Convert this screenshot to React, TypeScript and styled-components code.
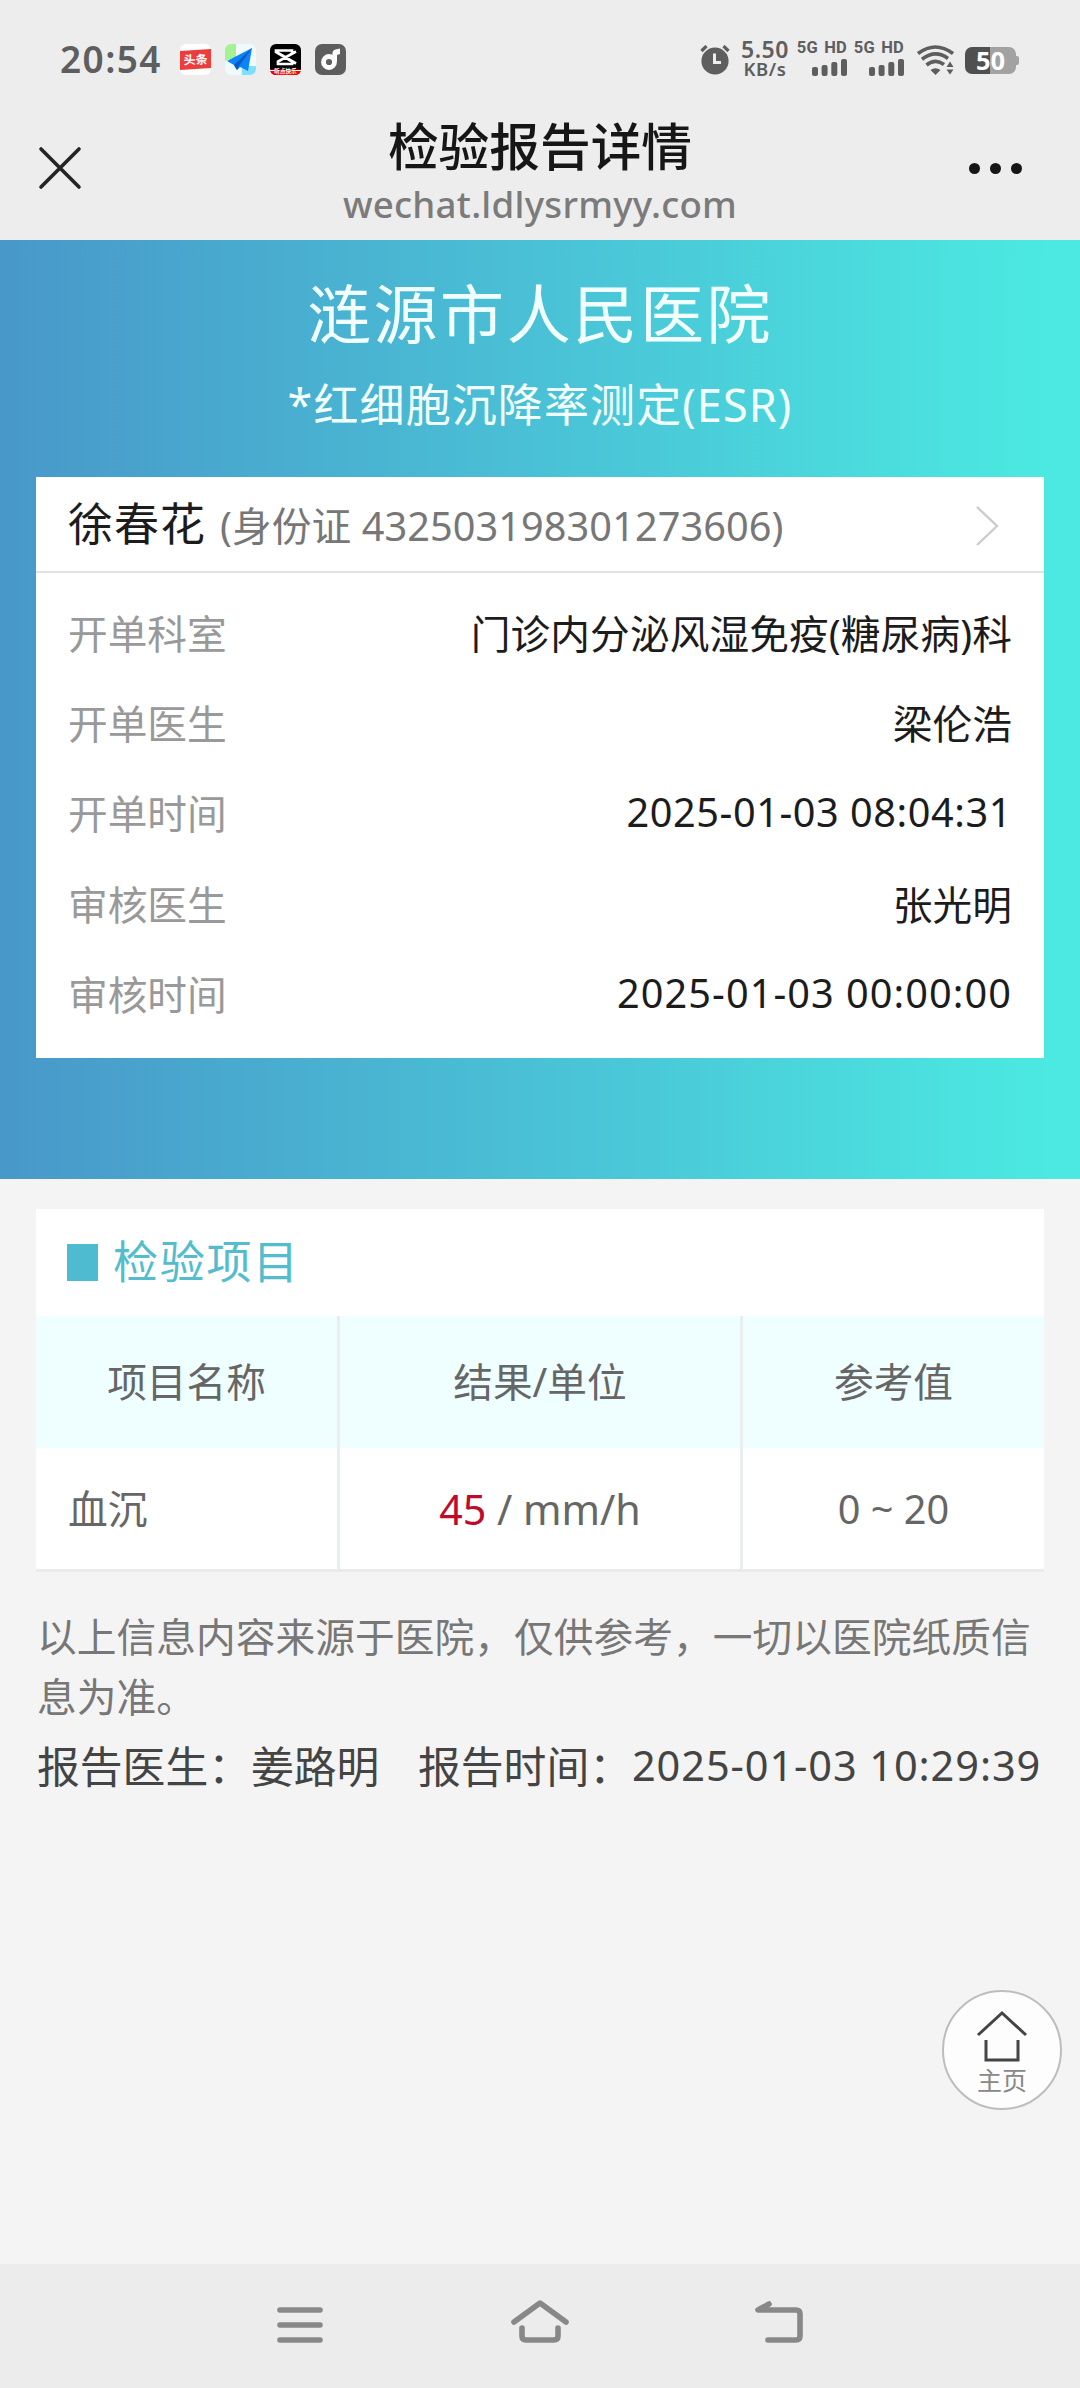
import React from "react";
import styled, { createGlobalStyle } from "styled-components";

const GlobalStyle = createGlobalStyle`
  * { box-sizing: border-box; }
  body { margin: 0; background: #f4f4f4; }
`;

const Screen = styled.div`
  width: 1080px;
  height: 2388px;
  display: flex;
  flex-direction: column;
  background: #f4f4f4;
  color: #1c1c1c;
  font-family: "Noto Sans", "Noto Sans CJK SC", sans-serif;
  font-size: 39.7px;
  white-space: nowrap;
  overflow: hidden;
`;

const TopArea = styled.header`
  height: 240px;
  flex: none;
  background: #ededed;
`;

const StatusBar = styled.div`
  height: 120px;
  padding: 0 61px 0 60px;
  display: flex;
  justify-content: space-between;
  color: #5e5e5e;
`;

const StatusGroup = styled.div`
  display: flex;
  align-items: center;
`;

const Clock = styled.span`
  margin-top: -3px;
  font-size: 37px;
  font-weight: 600;
  line-height: 50px;
  letter-spacing: 1.4px;
  width: 120px;
`;

const AppIcon = styled.svg`
  width: 31px;
  height: 31px;
  margin-right: 14px;
  margin-top: -1px;
  font-family: "Noto Sans CJK SC", sans-serif;
`;

const AlarmSvg = styled.svg`
  width: 30px;
  height: 30px;
  margin-top: -1px;
`;

const Speed = styled.div`
  width: 50px;
  margin: -3px 0 0 10px;
  display: flex;
  flex-direction: column;
  align-items: center;
  font-weight: 600;
`;

const SpeedLine = styled.span<{ $size: number; $spacing: number }>`
  font-size: ${(p) => p.$size}px;
  letter-spacing: ${(p) => p.$spacing}px;
  line-height: 20px;
`;

const Signal = styled.div`
  width: 48px;
  margin: -2px 0 0 9px;
  display: flex;
  flex-direction: column;
  align-items: flex-end;
  gap: 5px;
`;

const SignalLabel = styled.span`
  font-family: Roboto, sans-serif;
  font-size: 16.5px;
  font-weight: 700;
  line-height: 12px;
  word-spacing: 2px;
  letter-spacing: 0.2px;
`;

const BarsSvg = styled.svg`
  width: 35px;
  height: 17px;
`;

const WifiSvg = styled.svg`
  width: 37px;
  height: 30px;
  margin-left: 13px;
`;

const Battery = styled.div`
  width: 51px;
  height: 27px;
  margin: 1px 3px 0 11px;
  border-radius: 7px;
  background: linear-gradient(90deg, #505050 50%, #a2a2a2 50%);
  color: #ffffff;
  font-size: 25.5px;
  font-weight: 700;
  line-height: 27px;
  text-align: center;
  position: relative;

  &::after {
    content: "";
    position: absolute;
    right: -3px;
    top: 9px;
    width: 3px;
    height: 9px;
    border-radius: 0 2px 2px 0;
    background: #a2a2a2;
  }
`;

const TitleBar = styled.div`
  height: 120px;
  display: grid;
  grid-template-columns: 200px 1fr 200px;
`;

const CloseSvg = styled.svg`
  width: 44px;
  height: 44px;
  margin: 26px 0 0 38px;
`;

const TitleText = styled.div`
  display: flex;
  flex-direction: column;
  align-items: center;
`;

const PageTitle = styled.h1`
  margin: 0;
  font-size: 50.7px;
  font-weight: 500;
  line-height: 54px;
  color: #161616;
`;

const PageUrl = styled.span`
  margin-top: 3px;
  font-size: 36.7px;
  font-weight: 500;
  line-height: 54px;
  letter-spacing: 0.25px;
  color: #7b7b7b;
`;

const MoreDots = styled.div`
  display: flex;
  justify-content: flex-end;
  gap: 10px;
  padding: 43px 58px 0 0;
`;

const Dot = styled.i`
  width: 11px;
  height: 11px;
  border-radius: 50%;
  background: #161616;
`;

const Hero = styled.section`
  height: 939px;
  flex: none;
  padding: 36px 36px 0;
  color: #f2ffff;
  text-align: center;
  background: linear-gradient(90deg, #4898c9 0%, #4ac1d6 50%, #4be9e1 97%);
`;

const Hospital = styled.h2`
  margin: 0;
  font-size: 64px;
  font-weight: 400;
  line-height: 76px;
  letter-spacing: 2.6px;
`;

const TestName = styled.div`
  margin-top: 23px;
  height: 60px;
  font-size: 45px;
  line-height: 60px;
  letter-spacing: 1.1px;
`;

const PatientCard = styled.div`
  margin-top: 42px;
  height: 581px;
  background: #ffffff;
  color: #1c1c1c;
`;

const PatientRow = styled.div`
  height: 96px;
  padding: 0 44px 0 32px;
  display: flex;
  align-items: center;
  border-bottom: 2px solid #e2e2e2;
`;

const PatientName = styled.span`
  font-size: 45px;
  line-height: 60px;
  letter-spacing: 1px;
`;

const PatientId = styled.span`
  margin-left: 14px;
  flex: 1;
  text-align: left;
  color: #777777;
  letter-spacing: 0.07px;
`;

const ChevronSvg = styled.svg`
  width: 24px;
  height: 42px;
  margin-top: 3px;
`;

const InfoList = styled.dl`
  margin: 0;
  padding: 14px 32px 0;
`;

const InfoRow = styled.div`
  height: 90.2px;
  display: flex;
  align-items: center;
  justify-content: space-between;
`;

const InfoLabel = styled.dt`
  color: #999999;
`;

const InfoValue = styled.dd<{ $spacing?: number }>`
  margin: 0;
  letter-spacing: ${(p) => p.$spacing ?? 0.1}px;
`;

const Body = styled.main`
  flex: 1;
  padding: 30px 36px 0;
  display: flex;
  flex-direction: column;
`;

const ResultCard = styled.section`
  background: #ffffff;
  border-bottom: 3px solid #eaeaea;
`;

const SectionTitle = styled.h3`
  margin: 0;
  height: 107px;
  padding: 0 31px 6px;
  display: flex;
  align-items: center;
  gap: 15px;
  font-size: 45px;
  font-weight: 400;
  letter-spacing: 1.7px;
  color: #53bccd;
`;

const Marker = styled.i`
  width: 31px;
  height: 37px;
  margin-top: 6px;
  background: #4fbbd0;
`;

const TableRow = styled.div<{ $head?: boolean }>`
  height: ${(p) => (p.$head ? 132 : 121)}px;
  display: grid;
  grid-template-columns: 304px 403px 301px;
  background: ${(p) => (p.$head ? "#efffff" : "#ffffff")};
  color: #666666;
`;

const Cell = styled.div<{ $left?: boolean; $lift?: number; $size?: number }>`
  display: flex;
  align-items: center;
  justify-content: ${(p) => (p.$left ? "flex-start" : "center")};
  padding: 0 ${(p) => (p.$left ? 32 : 0)}px ${(p) => p.$lift ?? 0}px;
  border-right: 3px solid #e9eeee;
  font-size: ${(p) => p.$size ?? 39.7}px;
  white-space: pre;

  &:last-child { border-right: 0; }
`;

const Abnormal = styled.span`
  color: #c00a2c;
`;

const Disclaimer = styled.p`
  margin: 35px 0 0 1px;
  line-height: 60px;
  letter-spacing: 0.06px;
  color: #777777;
  white-space: normal;
`;

const ReportLine = styled.div`
  margin: 5px 0 0 1px;
  height: 64px;
  display: flex;
  align-items: center;
  font-size: 42.8px;
  color: #444444;
`;

const ReportDoctor = styled.span`
  width: 381px;
`;

const ReportDate = styled.span`
  margin-top: 2px;
  font-size: 41.5px;
  letter-spacing: 0.9px;
`;

const HomeButton = styled.button`
  margin: 194px -18px 0 auto;
  width: 120px;
  height: 120px;
  padding: 18px 0 0;
  display: flex;
  flex-direction: column;
  align-items: center;
  border: 2px solid #bdbdbd;
  border-radius: 50%;
  background: #fdfdfd;
  color: #888888;
  font-family: "Noto Sans CJK SC", sans-serif;
  font-size: 25px;
  line-height: 32px;
`;

const HomeSvg = styled.svg`
  width: 52px;
  height: 53px;
`;

const NavBar = styled.nav`
  height: 124px;
  flex: none;
  display: grid;
  grid-template-columns: 240px 240px 240px;
  justify-content: center;
  justify-items: center;
  background: #ececec;
`;

const NavSvg = styled.svg`
  width: 64px;
  height: 64px;
  margin-top: 29px;
  fill: none;
  stroke: #888888;
  stroke-width: 5.6;
  stroke-linecap: round;
  stroke-linejoin: round;
`;

const SignalMeter = () => (
  <Signal>
    <SignalLabel>5G HD</SignalLabel>
    <BarsSvg viewBox="0 0 35 17" fill="#5e5e5e">
      <rect x="0" y="8" width="6" height="9" rx="2" />
      <rect x="9.6" y="6" width="6" height="11" rx="2" />
      <rect x="19.3" y="3" width="6" height="14" rx="2" />
      <rect x="29" y="0" width="6" height="17" rx="2" />
    </BarsSvg>
  </Signal>
);

const info = [
  { label: "开单科室", value: "门诊内分泌风湿免疫(糖尿病)科" },
  { label: "开单医生", value: "梁伦浩" },
  { label: "开单时间", value: "2025-01-03 08:04:31", spacing: 0.55 },
  { label: "审核医生", value: "张光明" },
  { label: "审核时间", value: "2025-01-03 00:00:00", spacing: 1.05 },
];

export default function App() {
  return (
    <Screen>
      <GlobalStyle />
      <TopArea>
        <StatusBar>
          <StatusGroup>
            <Clock>20:54</Clock>
            <AppIcon viewBox="0 0 31 31">
              <rect width="31" height="31" rx="6" fill="#fff" />
              <path d="M0 7 31 5V24L0 26Z" fill="#ec3c3c" />
              <text x="15.5" y="20" fontSize="12" fontWeight="700" fill="#fff" textAnchor="middle" transform="rotate(-2 15 15)">头条</text>
            </AppIcon>
            <AppIcon viewBox="0 0 31 31">
              <rect width="31" height="31" rx="6" fill="#effafa" />
              <path d="M0 6a6 6 0 0 1 6-6h5v13L0 17Z" fill="#a4f293" />
              <path d="M17 31q-2-8 5-9h9v3a6 6 0 0 1-6 6Z" fill="#80dfff" />
              <path d="M27 4 2 17l7 4 3 5 3-3 8 4Z" fill="#0b84f6" />
              <path d="M27 4 9 21l3 5 2-4Z" fill="#0558c8" />
            </AppIcon>
            <AppIcon viewBox="0 0 31 31">
              <rect width="31" height="31" rx="6" fill="#000" />
              <path d="M0 25.500H31a6 6 0 0 1-6 5.500H6a6 6 0 0 1-6-5.500Z" fill="#f50505" />
              <path d="M26 7.500 8 17.500v2.500h14v-2.500L6 8V6.500h16v3M26 19.500 8 9" fill="none" stroke="#fff" strokeWidth="2.700" />
              <path d="M0 26.500H5M26 26.500h5" stroke="#fff" strokeWidth="1" />
              <text x="15.500" y="29" fontSize="5.600" fontWeight="700" fill="#fff" textAnchor="middle">听点快乐</text>
            </AppIcon>
            <AppIcon viewBox="0 0 31 31">
              <rect width="31" height="31" rx="7" fill="#5e5e5e" />
              <circle cx="14" cy="18" r="5.500" fill="none" stroke="#fff" strokeWidth="4.800" />
              <path d="M17.500 14V9q0-2.500 3-3.500L25 4.500V10l-3 1v7Z" fill="#fff" />
            </AppIcon>
          </StatusGroup>
          <StatusGroup>
            <AlarmSvg viewBox="0 0 30 30">
              <circle cx="15" cy="16" r="13.600" fill="#5e5e5e" />
              <path d="M1.500 6 6.500 1M28.500 6 23.500 1" stroke="#ededed" strokeWidth="6" />
              <path d="M1.500 6 6.500 1M28.500 6 23.500 1" stroke="#5e5e5e" strokeWidth="3.200" />
              <path d="M14.500 8.500V17.500H21" fill="none" stroke="#ededed" strokeWidth="3" />
            </AlarmSvg>
            <Speed>
              <SpeedLine $size={23} $spacing={0.5}>5.50</SpeedLine>
              <SpeedLine $size={18.5} $spacing={0.6}>KB/s</SpeedLine>
            </Speed>
            <SignalMeter />
            <SignalMeter />
            <WifiSvg viewBox="0 0 37 30" fill="none" stroke="#5e5e5e" strokeWidth="3.600">
              <path d="M1 8.500Q18.500-4.500 36 8.500" />
              <path d="M5 14.200Q18.500 4 31 13.500" />
              <path d="M9.500 20Q18.500 13 27 19.500" />
              <path d="M13.500 25Q18.500 21.500 23.500 25L18.500 30Z" fill="#5e5e5e" stroke="none" />
              <path d="M29.500 22 33 16.500 36.500 22ZM29.500 24.500H36.500L33 29.500Z" fill="#5e5e5e" stroke="none" />
            </WifiSvg>
            <Battery>50</Battery>
          </StatusGroup>
        </StatusBar>
        <TitleBar>
          <CloseSvg viewBox="0 0 44 44" stroke="#242424" strokeWidth="3.600" strokeLinecap="round">
            <path d="M3 3 41 41M41 3 3 41" />
          </CloseSvg>
          <TitleText>
            <PageTitle>检验报告详情</PageTitle>
            <PageUrl>wechat.ldlysrmyy.com</PageUrl>
          </TitleText>
          <MoreDots>
            <Dot />
            <Dot />
            <Dot />
          </MoreDots>
        </TitleBar>
      </TopArea>

      <Hero>
        <Hospital>涟源市人民医院</Hospital>
        <TestName>*红细胞沉降率测定(ESR)</TestName>
        <PatientCard>
          <PatientRow>
            <PatientName>徐春花</PatientName>
            <PatientId>(身份证 432503198301273606)</PatientId>
            <ChevronSvg viewBox="0 0 24 42" fill="none" stroke="#cccccc" strokeWidth="2.400">
              <path d="M1 2 21 21 1 40" />
            </ChevronSvg>
          </PatientRow>
          <InfoList>
            {info.map((row) => (
              <InfoRow key={row.label}>
                <InfoLabel>{row.label}</InfoLabel>
                <InfoValue $spacing={row.spacing}>{row.value}</InfoValue>
              </InfoRow>
            ))}
          </InfoList>
        </PatientCard>
      </Hero>

      <Body>
        <ResultCard>
          <SectionTitle>
            <Marker />
            检验项目
          </SectionTitle>
          <TableRow $head>
            <Cell $lift={5}>项目名称</Cell>
            <Cell $lift={5}>结果/单位</Cell>
            <Cell $lift={5}>参考值</Cell>
          </TableRow>
          <TableRow>
            <Cell $left $lift={4}>血沉</Cell>
            <Cell $size={41.2}>
              <Abnormal>45</Abnormal> / mm/h
            </Cell>
            <Cell>0 ~ 20</Cell>
          </TableRow>
        </ResultCard>
        <Disclaimer>以上信息内容来源于医院，仅供参考，一切以医院纸质信息为准。</Disclaimer>
        <ReportLine>
          <ReportDoctor>报告医生：姜路明</ReportDoctor>
          <span>报告时间：</span>
          <ReportDate>2025-01-03 10:29:39</ReportDate>
        </ReportLine>
        <HomeButton>
          <HomeSvg viewBox="0 0 52 53" fill="none" stroke="#444444" strokeWidth="3">
            <path d="M2 25 26 3 50 25" />
            <path d="M10 30V50H42V30" />
          </HomeSvg>
          主页
        </HomeButton>
      </Body>

      <NavBar>
        <NavSvg viewBox="0 0 64 64">
          <path d="M12 17H52M12 32H52M12 47H52" />
        </NavSvg>
        <NavSvg viewBox="0 0 64 64">
          <path d="M6 29 32 10 58 29M14 35V43q0 4 4 4H46q4 0 4-4V35" />
        </NavSvg>
        <NavSvg viewBox="0 0 64 64">
          <path d="M21 11 10 17H48q4 0 4 4V43q0 4-4 4H20" />
        </NavSvg>
      </NavBar>
    </Screen>
  );
}
